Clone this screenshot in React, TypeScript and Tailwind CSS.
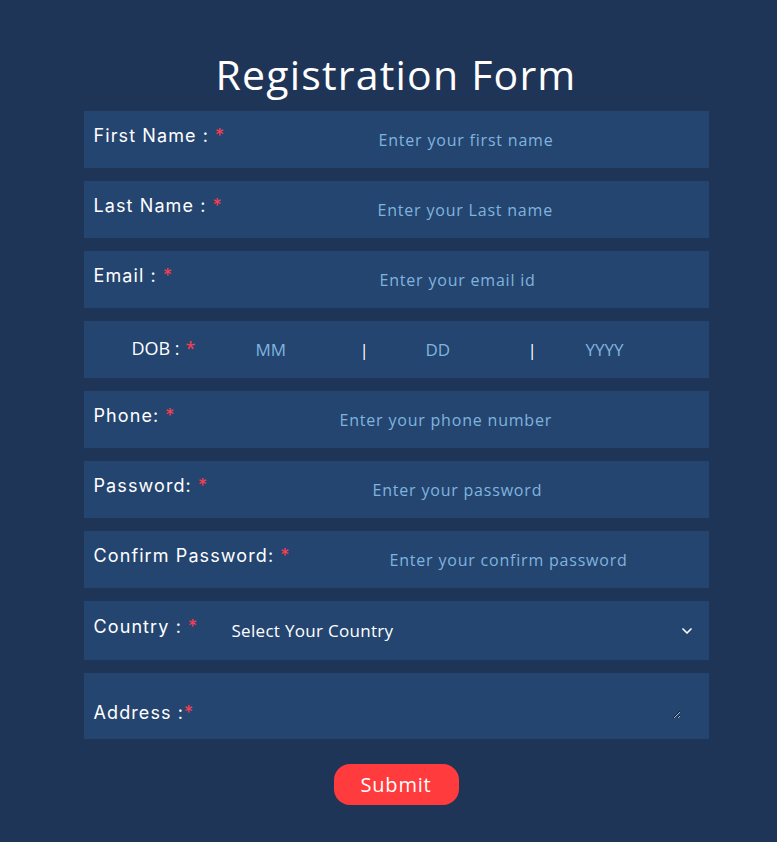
import { ChevronDown } from "lucide-react";

const fields = [
  { label: "First Name :", ph: "Enter your first name", lw: "w-[285px]", type: "text" },
  { label: "Last Name :", ph: "Enter your Last name", lw: "w-[284px]", type: "text" },
  { label: "Email :", ph: "Enter your email id", lw: "w-[286px]", type: "email" },
];

const fields2 = [
  { label: "Phone:", ph: "Enter your phone number", lw: "w-[246px]", type: "tel" },
  { label: "Password:", ph: "Enter your password", lw: "w-[279px]", type: "password" },
  { label: "Confirm Password:", ph: "Enter your confirm password", lw: "w-[296px]", type: "password" },
];

const labelFont = "font-['Inter','Noto_Sans',sans-serif] tracking-[1.1px]";
const inputFont = "font-['Open_Sans','Noto_Sans',sans-serif]";

function Star() {
  return <span className="text-[#ff3d4f] ml-[6px]">*</span>;
}

function Row({ label, ph, lw, type }: { label: string; ph: string; lw: string; type: string }) {
  return (
    <div className="flex items-center h-[57px] bg-[#254571] pl-[10px]">
      <label className={`${lw} shrink-0 text-white text-[18px] pb-[8px] ${labelFont}`}>
        {label}
        <Star />
      </label>
      <input
        type={type}
        placeholder={ph}
        className={`flex-1 bg-transparent outline-none text-[16px] text-white placeholder:text-[#7fb4de] tracking-[0.8px] ${inputFont}`}
      />
    </div>
  );
}

export default function App() {
  return (
    <div className="min-h-[842px] bg-[#1f3557] flex flex-col items-center pt-[48px]">
      <div className="w-[625px] ml-[15px] flex flex-col">
        <h1 className={`text-white text-[41px] leading-[52px] text-center mb-[11px] tracking-[1.2px] ${inputFont}`}>
          Registration Form
        </h1>
        <div className="flex flex-col gap-[13px]">
          {fields.map((f, i) => (
            <Row key={i} {...f} />
          ))}
          <div className="flex items-center h-[57px] bg-[#254571] text-[17px] font-['Open_Sans',sans-serif]">
            <span className="text-white ml-[48px] w-[124px] text-[18px] pb-[2px]">
              DOB :<Star />
            </span>
            <span className="text-[#7fb4de] w-[108px]">MM</span>
            <span className="text-white w-[62px] -ml-[4px] mr-[4px]">|</span>
            <span className="text-[#7fb4de] w-[106px]">DD</span>
            <span className="text-white w-[54px] -ml-[4px] mr-[4px]">|</span>
            <span className="text-[#7fb4de]">YYYY</span>
          </div>
          {fields2.map((f, i) => (
            <Row key={i} {...f} />
          ))}
          <div className="flex items-center h-[59px] bg-[#254571] pl-[10px] pr-[14px]">
            <label className={`w-[138px] shrink-0 text-white text-[18px] pb-[8px] ${labelFont}`}>
              Country :<Star />
            </label>
            <span className="flex-1 text-white text-[17px] tracking-[0.3px] font-['Open_Sans',sans-serif]">Select Your Country</span>
            <ChevronDown className="text-white w-[16px] h-[16px]" strokeWidth={2.5} />
          </div>
          <div className="flex items-end h-[66px] bg-[#254571] pl-[10px] pr-[28px] pb-[20px]">
            <label className={`shrink-0 text-white text-[18px] -mb-[7px] ${labelFont}`}>
              Address :<span className="text-[#ff3d4f]">*</span>
            </label>
            <textarea className="flex-1 h-[20px] bg-transparent outline-none resize text-white" />
          </div>
        </div>
        <div className="flex justify-center mt-[25px]">
          <button className={`w-[125px] h-[41px] rounded-[16px] bg-[#ff3b3d] text-white text-[20px] tracking-[0.8px] ${inputFont}`}>
            Submit
          </button>
        </div>
      </div>
    </div>
  );
}
